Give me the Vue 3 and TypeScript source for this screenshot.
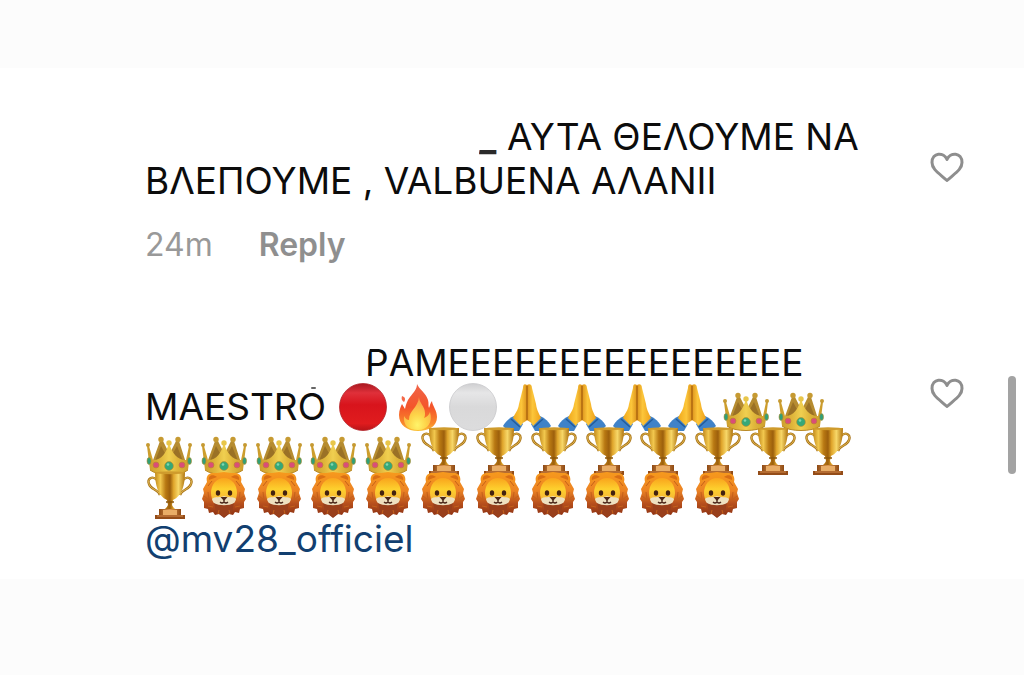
<script setup lang="ts">
import { ref } from 'vue'

type Emoji = 'red' | 'fire' | 'white' | 'pray' | 'crown' | 'trophy' | 'lion'

const repeat = (name: Emoji, count: number): Emoji[] => Array<Emoji>(count).fill(name)

const firstRow: Emoji[] = ['red', 'fire', 'white', ...repeat('pray', 4), ...repeat('crown', 2)]
const secondRow: Emoji[] = [...repeat('crown', 5), ...repeat('trophy', 8)]
const thirdRow: Emoji[] = ['trophy', ...repeat('lion', 10)]

const liked = ref<boolean[]>([false, false])
const toggle = (i: number) => {
  liked.value[i] = !liked.value[i]
}
</script>

<template>
  <div class="page">
    <svg class="defs" width="0" height="0" aria-hidden="true">
      <defs>
        <linearGradient id="g-red" x1="0" y1="0" x2="0" y2="1">
          <stop offset="0" stop-color="#a81820" /><stop offset=".2" stop-color="#e0303a" />
          <stop offset=".45" stop-color="#d8141c" /><stop offset=".85" stop-color="#e01c1e" />
          <stop offset="1" stop-color="#b81418" />
        </linearGradient>
        <linearGradient id="g-white" x1="0" y1="0" x2="0" y2="1">
          <stop offset="0" stop-color="#cfcfd1" /><stop offset=".2" stop-color="#e6e6e7" />
          <stop offset=".5" stop-color="#d9d9da" /><stop offset="1" stop-color="#dcdcdd" />
        </linearGradient>
        <linearGradient id="g-fire" x1="0" y1="0" x2="0" y2="1">
          <stop offset="0" stop-color="#f0654a" /><stop offset=".5" stop-color="#f4552a" />
          <stop offset=".85" stop-color="#f98a2c" /><stop offset="1" stop-color="#fbc53a" />
        </linearGradient>
        <radialGradient id="g-flame" cx=".5" cy=".85" r=".75">
          <stop offset="0" stop-color="#fff46a" /><stop offset=".45" stop-color="#fdd348" />
          <stop offset="1" stop-color="#faa04a" />
        </radialGradient>
        <linearGradient id="g-hand-l" x1="0" y1="0" x2="1" y2="0">
          <stop offset="0" stop-color="#f0a81c" /><stop offset=".6" stop-color="#fcc63a" />
          <stop offset="1" stop-color="#dc921c" />
        </linearGradient>
        <linearGradient id="g-hand-r" x1="0" y1="0" x2="1" y2="0">
          <stop offset="0" stop-color="#dc921c" /><stop offset=".4" stop-color="#fcc63a" />
          <stop offset="1" stop-color="#eea01a" />
        </linearGradient>
        <linearGradient id="g-gold" x1="0" y1="0" x2="1" y2="0">
          <stop offset="0" stop-color="#c28a1c" /><stop offset=".18" stop-color="#f2c84e" />
          <stop offset=".36" stop-color="#b87812" /><stop offset=".5" stop-color="#9c5f0c" />
          <stop offset=".62" stop-color="#e0a62c" /><stop offset=".78" stop-color="#f7d768" />
          <stop offset="1" stop-color="#b0740f" />
        </linearGradient>
        <linearGradient id="g-base" x1="0" y1="0" x2="1" y2="0">
          <stop offset="0" stop-color="#8e4a14" /><stop offset=".5" stop-color="#dc9650" />
          <stop offset="1" stop-color="#8e4a14" />
        </linearGradient>
        <linearGradient id="g-crown" x1="0" y1="0" x2="1" y2="0">
          <stop offset="0" stop-color="#c9992a" /><stop offset=".3" stop-color="#dfb53a" />
          <stop offset=".5" stop-color="#f0cf50" /><stop offset=".7" stop-color="#dfb53a" />
          <stop offset="1" stop-color="#c9992a" />
        </linearGradient>
        <linearGradient id="g-mane" x1="0" y1="0" x2="0" y2="1">
          <stop offset="0" stop-color="#f79a1c" /><stop offset=".4" stop-color="#ec8324" />
          <stop offset=".68" stop-color="#b8501c" /><stop offset="1" stop-color="#852c12" />
        </linearGradient>
        <linearGradient id="g-face" x1="0" y1="0" x2="0" y2="1">
          <stop offset="0" stop-color="#f9a41c" /><stop offset=".4" stop-color="#fdd02e" />
          <stop offset="1" stop-color="#f2a63a" />
        </linearGradient>
      </defs>

      <symbol id="e-red" viewBox="0 0 48 48">
        <circle cx="24" cy="24" r="23.5" fill="url(#g-red)" stroke="#b3252b" stroke-width=".8" />
      </symbol>
      <symbol id="e-white" viewBox="0 0 48 48">
        <circle cx="24" cy="24" r="23.5" fill="url(#g-white)" stroke="#c9c9cc" stroke-width=".8" />
      </symbol>
      <symbol id="e-fire" viewBox="0 0 48 48">
        <path d="M23 1c2 5 9 9 11 16 1 3 0 6 1 8 1-2 1-5 3-7 0 4 5 9 5 16 0 9-8 14-19 14S5 42 5 32c0-5 2-9 3-11l3 5c1-5 2-8 5-12 4-5 7-8 7-13z" fill="url(#g-fire)" />
        <path d="M8 13c3 1 4 3 2 6-2-1-3-3-2-6z" fill="#f4694a" />
        <path d="M25 14c0 6 6 9 6 16 0 2 0 3-1 5 3-1 5-3 6-6 3 10-2 18-12 18S9 42 10 33c2 3 3 4 5 4 0-10 9-12 10-23z" fill="url(#g-flame)" />
      </symbol>
      <symbol id="e-pray" viewBox="0 0 48 48">
        <path d="M0 43c2-4 6-8 11-10l9 8-4 7H5z" fill="#3f82c8" />
        <path d="M48 43c-2-4-6-8-11-10l-9 8 4 7h11z" fill="#3f82c8" />
        <path d="M8 36l9 8M40 36l-9 8" stroke="#235c9c" stroke-width="1.500" fill="none" />
        <path d="M24 2c-3-2-4 0-4 3l-4 16c-1 7-4 9-6 14l8 8c2-5 5-4 6-6z" fill="url(#g-hand-l)" />
        <path d="M24 2c3-2 5 0 5 3l4 16c1 7 3 9 5 14l-8 8c-2-5-4-4-6-6z" fill="url(#g-hand-r)" />
        <path d="M24 3v34" stroke="#a8620e" stroke-width="1.300" />
      </symbol>
      <symbol id="e-crown" viewBox="0 0 48 48">
        <path d="M7 36l8-22h3l5 10h3l5-10h3l7 22-17 4z" fill="#b68c30" />
        <path d="M10 34l6-15 6 11M38 34l-6-15-6 11" fill="#9a7126" />
        <path d="M2 19l3 24c7 6 31 6 38 0l3-24h-2l-3 14c-9 0-14-7-17-17-3 10-7 17-16 17L4 19z" fill="url(#g-crown)" />
        <path d="M5 43c7 6 31 6 38 0" stroke="#b88825" stroke-width="1" fill="none" />
        <g fill="#c69a32">
          <circle cx="3" cy="18" r="2" /><circle cx="45" cy="18" r="2" />
          <circle cx="16" cy="12.500" r="2.700" /><circle cx="33" cy="12.500" r="2.700" />
        </g>
        <circle cx="24" cy="16" r="2.700" fill="#e8c64a" />
        <g stroke="#b98a2a" stroke-width=".6">
          <circle cx="24" cy="39" r="4.400" fill="#35a878" />
          <circle cx="11" cy="38" r="3" fill="#d94e78" /><circle cx="37" cy="38" r="3" fill="#d94e78" />
          <ellipse cx="4" cy="34" rx="2" ry="3.400" fill="#2fa078" />
          <ellipse cx="44.500" cy="34" rx="2" ry="3.400" fill="#2fa078" />
        </g>
        <circle cx="23" cy="37.500" r="1.300" fill="#7fd6b0" />
      </symbol>
      <symbol id="e-trophy" viewBox="0 0 48 48">
        <g fill="none" stroke="#a9741a" stroke-width="2.400">
          <path d="M12 9C7 4 2 8 4 13c2 6 9 5 11 11" /><path d="M38 9c5-5 10-1 8 4-2 6-9 5-11 11" />
        </g>
        <g fill="none" stroke="#ecc65c" stroke-width=".8">
          <path d="M12 9C7 4 2 8 4 13c2 6 9 5 11 11" /><path d="M38 9c5-5 10-1 8 4-2 6-9 5-11 11" />
        </g>
        <path d="M10 1h30c0 13-3 24-12 28l-1 5c1 3 4 4 5 6H18c1-2 4-3 5-6l-1-5C13 25 10 14 10 1z" fill="url(#g-gold)" />
        <ellipse cx="25" cy="1.800" rx="15" ry="1.500" fill="#cf9b2c" />
        <path d="M21 31h8" stroke="#8b570c" stroke-width="1.500" />
        <path d="M14 38h22v7H14z" fill="url(#g-base)" /><path d="M18 39h14v5H18z" fill="#e9ad66" />
        <path d="M10 44h30v4H10z" fill="#944c18" /><path d="M12 45h26" stroke="#d48c4c" stroke-width="1" />
      </symbol>
      <symbol id="e-lion" viewBox="0 0 48 48">
        <path d="M24 1l7 1 5 0c5 1 6 5 5 9l4 7-1 4 2 6-2 3 0 6-4 1-1 4-4-1-2 3-4-1-5 4-5-4-4 1-2-3-4 1-1-4-4-1 0-6-2-3 2-6-1-4 4-7c-1-4 0-8 5-9l5 0z" fill="url(#g-mane)" />
        <path d="M9 9c-1-5 4-6 8-3M39 9c1-5-4-6-8-3" fill="#d96f15" />
        <path d="M24 7c8 0 13 7 13 15 0 8-5 13-13 13s-13-5-13-13c0-8 5-15 13-15z" fill="url(#g-face)" />
        <path d="M12 28c3-3 8-1 12-3 4 2 9 0 12 3-1 5-5 7-12 7s-11-2-12-7z" fill="#eee0c0" />
        <path d="M14 32c5 3 15 3 20 0l-2 9-8 5-8-5z" fill="#99401c" />
        <ellipse cx="18" cy="22" rx="2.200" ry="2.800" fill="#43220f" /><ellipse cx="30" cy="22" rx="2.200" ry="2.800" fill="#43220f" />
        <path d="M20.500 26h7L24 30z" fill="#4a261a" />
        <path d="M24 29v2m-4 0q2 2 4 0 2 2 4 0" stroke="#4a261a" stroke-width="1.200" fill="none" />
        <path d="M4 25l5 4-1-8M44 25l-5 4 1-8M8 15l4-5M40 15l-4-5M8 35l5 1M40 35l-5 1M18 43l1-4M30 43l-1-4" stroke="#c4601a" stroke-width="1" fill="none" />
      </symbol>
    </svg>

    <main class="comments">
      <article class="comment">
        <div class="body">
          <p class="text">
            <span class="line"><span class="hidden-name long"></span><span class="underscore">_</span> ΑΥΤΑ ΘΕΛΟΥΜΕ ΝΑ</span>
            <span class="line">ΒΛΕΠΟΥΜΕ , VALBUENA ΑΛΑΝΙΙ</span>
          </p>
          <div class="meta">
            <time>24m</time>
            <button type="button" class="reply">Reply</button>
          </div>
        </div>
        <button type="button" class="like" aria-label="Like" :aria-pressed="liked[0]" @click="toggle(0)">
          <svg viewBox="0 0 34 30"><path d="M17 7.500C14 0 2 0 2 10.500 2 17 8 20.500 17 28.500 26 20.500 32 17 32 10.500 32 0 20 0 17 7.500z" /></svg>
        </button>
      </article>

      <article class="comment">
        <div class="body">
          <div class="text">
            <div class="line"><span class="hidden-name short"></span><span class="cut">P</span>AMEEEEEEEEEEEEEEEE</div>
            <div class="line mixed">
              <span class="word">MAESTRO</span>
              <span class="emojis first">
                <svg v-for="(name, i) in firstRow" :key="i" class="emoji"><use :href="`#e-${name}`" /></svg>
              </span>
            </div>
            <div class="line emojis second">
              <svg v-for="(name, i) in secondRow" :key="i" class="emoji"><use :href="`#e-${name}`" /></svg>
            </div>
            <div class="line emojis third">
              <svg v-for="(name, i) in thirdRow" :key="i" class="emoji"><use :href="`#e-${name}`" /></svg>
            </div>
            <a class="line mention" href="#mv28_officiel">@mv28_officiel</a>
          </div>
        </div>
        <button type="button" class="like" aria-label="Like" :aria-pressed="liked[1]" @click="toggle(1)">
          <svg viewBox="0 0 34 30"><path d="M17 7.500C14 0 2 0 2 10.500 2 17 8 20.500 17 28.500 26 20.500 32 17 32 10.500 32 0 20 0 17 7.500z" /></svg>
        </button>
      </article>
      <span class="scrollbar"></span>
    </main>
  </div>
</template>

<style>
body {
  margin: 0;
  background: #fcfcfc;
}
</style>

<style scoped>
.page {
  box-sizing: border-box;
  min-height: 100vh;
  padding: 68px 0 96px;
  font-family: Inter, 'Liberation Sans', sans-serif;
  color: #0c0c0c;
}
.defs {
  position: absolute;
}
.comments {
  position: relative;
  display: flex;
  flex-direction: column;
  gap: 76px;
  padding: 47px 60px 18px 145px;
  background: #fff;
}
.comment {
  display: flex;
  justify-content: space-between;
  align-items: flex-start;
}
.text {
  margin: 0;
  font-size: 37px;
  line-height: 44px;
}
.line {
  display: block;
  height: 44px;
  white-space: nowrap;
}
.hidden-name {
  display: inline-block;
}
.long {
  width: 334px;
}
.short {
  position: relative;
  width: 220px;
}
.short::after {
  content: '';
  position: absolute;
  right: 49px;
  bottom: -13px;
  width: 5px;
  height: 2px;
  border-radius: 1px;
  background: #666;
}
.underscore {
  display: inline-block;
  font-weight: 700;
  color: #2a2a2a;
  clip-path: polygon(6px 0, 100% 0, 100% 100%, 0 100%, 0 38px);
}
.cut {
  display: inline-block;
  clip-path: polygon(7px 0, 100% 0, 100% 100%, 0 100%, 0 60%);
}
.mixed {
  display: flex;
  gap: 12px;
}
.word {
  width: 182px;
}
.emojis {
  display: flex;
  justify-content: space-between;
  align-items: center;
}
.first {
  width: 486px;
}
.second {
  width: 706px;
}
.third {
  width: 596px;
}
.emoji {
  flex: none;
  width: 48px;
  height: 48px;
}
.mention {
  color: #123f70;
  text-decoration: none;
}
.meta {
  display: flex;
  gap: 46px;
  margin-top: 22px;
  font-size: 32px;
  line-height: 40px;
  color: #999;
}
.reply {
  padding: 0;
  border: 0;
  background: none;
  font: inherit;
  font-weight: 600;
  color: #8f8f8f;
}
.like {
  margin-top: 37px;
  padding: 0;
  border: 0;
  background: none;
}
.like svg {
  display: block;
  width: 34px;
  height: 30px;
  fill: none;
  stroke: #8e8e8e;
  stroke-width: 3px;
  stroke-linejoin: round;
}
.like[aria-pressed='true'] svg {
  fill: #ed4956;
  stroke: #ed4956;
}
.scrollbar {
  position: absolute;
  top: 308px;
  right: 8px;
  width: 8px;
  height: 98px;
  border-radius: 4px;
  background: #a3a3a3;
}
</style>
